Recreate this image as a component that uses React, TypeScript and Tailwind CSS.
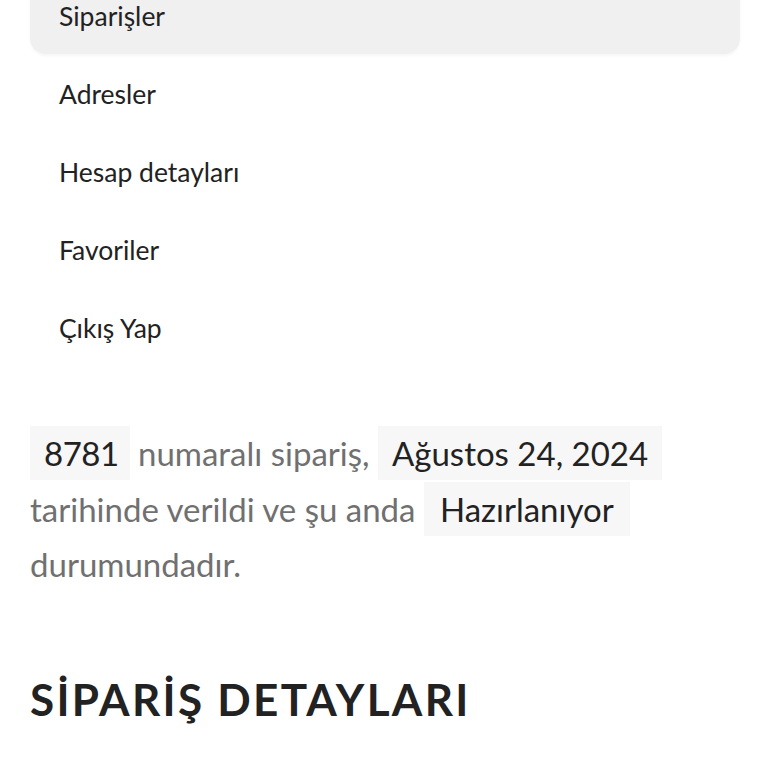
import React from "react";

const items = ["Siparişler", "Adresler", "Hesap detayları", "Favoriler", "Çıkış Yap"];

export default function App() {
  return (
    <div className="w-[768px] h-[768px] overflow-hidden bg-white" style={{ fontFamily: "Lato, 'Open Sans', sans-serif" }}>
      <nav className="flex flex-col gap-[4px] mt-[-20px] ml-[30px] mr-[28px]">
        {items.map((t, i) => (
          <div
            key={t}
            className={
              "h-[74px] flex items-center pl-[29px] rounded-[16px] text-[26.5px] text-[#222] " +
              (i === 0 ? "bg-[#f0f0f0] shadow-[0_2px_3px_rgba(0,0,0,0.04)]" : "")
            }
          >
            {t}
          </div>
        ))}
      </nav>
      <p className="mt-[60px] px-[30px] text-[33px] leading-[55.5px] text-[#707070]">
        <span className="bg-[#f7f7f7] text-[#222] pl-[14px] pr-[11px] py-[7px] tracking-[-0.5px]">8781</span> numaralı sipariş,{" "}
        <span className="bg-[#f7f7f7] text-[#222] px-[14px] py-[7px]">Ağustos 24, 2024</span> tarihinde verildi ve şu anda{" "}
        <span className="bg-[#f7f7f7] text-[#222] px-[16px] py-[7px]">Hazırlanıyor</span> durumundadır.
      </p>
      <h2 className="mt-[84px] px-[30px] text-[44px] font-bold tracking-[2.3px] text-[#222] leading-none">SİPARİŞ DETAYLARI</h2>
    </div>
  );
}
